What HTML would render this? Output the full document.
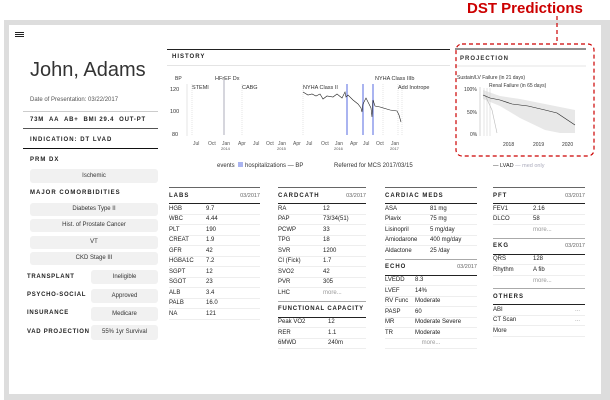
<!DOCTYPE html>
<html><head><meta charset="utf-8">
<style>
*{margin:0;padding:0;box-sizing:border-box}
body{width:610px;height:400px;background:#fff;position:relative;overflow:hidden;font-family:"Liberation Sans",sans-serif;color:#222}
.a{position:absolute;white-space:nowrap}
.frame{position:absolute;left:4px;top:20px;width:606px;height:380px;background:#ddd}
.inner{position:absolute;left:9px;top:25px;width:592px;height:369px;background:#fff}
.t{font-size:6px}
.h{font-size:6px;font-weight:bold;letter-spacing:1px}
.pill{position:absolute;background:#f1f1f1;border-radius:3px;font-size:6px;text-align:center;color:#333}
.line{position:absolute;height:1px}
.tb{position:absolute}
.tb .hd{display:flex;justify-content:space-between;height:17px;align-items:center;border-top:1px solid #666;border-bottom:1px solid #222;font-size:6px;white-space:nowrap}
.tb .hd b{letter-spacing:1px;white-space:nowrap}
.tb .hd span{color:#666;font-size:5.5px}
.tb .r{display:flex;height:10.5px;align-items:center;border-bottom:1px solid #eee;font-size:6px;white-space:nowrap}
.tb .r i{font-style:normal;display:block}
.more{color:#999}
</style></head><body>
<div class="frame"></div><div class="inner"></div>

<div class="a" style="left:15px;top:32px;width:9px;height:1px;background:#222;box-shadow:0 2px 0 #222,0 4px 0 #222"></div>
<div class="a" style="left:30px;top:59px;font-size:20px;font-weight:300;color:#333">John, Adams</div>
<div class="a t" style="left:30px;top:97px;color:#555">Date of Presentation: 03/22/2017</div>
<div class="line" style="left:23px;top:111px;width:135px;background:#ccc"></div>
<div class="a h" style="left:30px;top:117px;letter-spacing:.8px">73M &nbsp;AA &nbsp;AB+ &nbsp;BMI 29.4 &nbsp;OUT-PT</div>
<div class="line" style="left:23px;top:128px;width:135px;background:#555"></div>
<div class="a h" style="left:30px;top:137px">INDICATION: DT LVAD</div>
<div class="line" style="left:23px;top:148px;width:135px;background:#111"></div>
<div class="a h" style="left:30px;top:157px">PRM DX</div>
<div class="pill" style="left:30px;top:169px;width:128px;height:14px;line-height:14px">Ischemic</div>
<div class="a h" style="left:30px;top:190px">MAJOR COMORBIDITIES</div>
<div class="pill" style="left:30px;top:203px;width:128px;height:13px;line-height:13px">Diabetes Type II</div>
<div class="pill" style="left:30px;top:219px;width:128px;height:13px;line-height:13px">Hist. of Prostate Cancer</div>
<div class="pill" style="left:30px;top:236px;width:128px;height:13px;line-height:13px">VT</div>
<div class="pill" style="left:30px;top:252px;width:128px;height:13px;line-height:13px">CKD Stage III</div>
<div class="a h" style="left:27px;top:274px;letter-spacing:.7px">TRANSPLANT</div>
<div class="pill" style="left:91px;top:270px;width:67px;height:14px;line-height:14px">Ineligible</div>
<div class="a h" style="left:27px;top:292px;letter-spacing:.7px">PSYCHO-SOCIAL</div>
<div class="pill" style="left:91px;top:289px;width:67px;height:14px;line-height:14px">Approved</div>
<div class="a h" style="left:27px;top:310px;letter-spacing:.7px">INSURANCE</div>
<div class="pill" style="left:91px;top:307px;width:67px;height:14px;line-height:14px">Medicare</div>
<div class="a h" style="left:27px;top:329px;letter-spacing:.7px">VAD PROJECTION</div>
<div class="pill" style="left:91px;top:325px;width:67px;height:15px;line-height:15px">55% 1yr Survival</div>

<div class="line" style="left:167px;top:49px;width:283px;background:#222"></div>
<div class="a h" style="left:172px;top:54px">HISTORY</div>
<div class="line" style="left:167px;top:65px;width:283px;background:#e4e4e4"></div>
<svg class="a" style="left:0;top:0" width="610" height="400" font-family="Liberation Sans" font-size="5.5" fill="#333">
<g stroke="#ccc" stroke-width="0.5" stroke-dasharray="1,1">
<line x1="192" y1="84" x2="192" y2="135"/><line x1="242" y1="84" x2="242" y2="135"/><line x1="303" y1="84" x2="303" y2="135"/><line x1="383" y1="84" x2="383" y2="135"/><line x1="398" y1="84" x2="398" y2="135"/><line x1="402" y1="84" x2="402" y2="135"/>
</g>
<line x1="224" y1="80" x2="224" y2="135" stroke="#99a" stroke-width="0.8"/>
<rect x="346" y="84" width="2" height="51" fill="#aab4f0"/><rect x="362" y="84" width="2" height="51" fill="#aab4f0"/><rect x="372" y="84" width="2" height="51" fill="#aab4f0"/>
<polyline fill="none" stroke="#222" stroke-width="0.6" points="303,92 308,95 312,94 316,96 320,94 323,99 327,96 333,97 337,94 342,98 345,92 346,97 348,95 353,100 358,104 361,108 362,112 363,104 366,98 369,104 371,108 372,117 373,100 375,106 380,107 390,110 397,111 399,115 401,122"/>
<line x1="187" y1="84" x2="187" y2="136" stroke="#ccc" stroke-width="0.5"/>
<text x="175" y="80" font-size="5">BP</text>
<text x="170" y="91">120</text><text x="170" y="113">100</text><text x="172" y="136">80</text>
<text x="192" y="89">STEMI</text><text x="215" y="80">HFrEF Dx</text><text x="242" y="89">CABG</text><text x="303" y="89">NYHA Class II</text><text x="375" y="80">NYHA Class IIIb</text><text x="398" y="89">Add Inotrope</text>
<g font-size="5" fill="#555"><text x="193" y="145">Jul</text><text x="208" y="145">Oct</text><text x="222" y="145">Jan</text><text x="238" y="145">Apr</text><text x="253" y="145">Jul</text><text x="266" y="145">Oct</text><text x="278" y="145">Jan</text><text x="293" y="145">Apr</text><text x="306" y="145">Jul</text><text x="321" y="145">Oct</text><text x="335" y="145">Jan</text><text x="350" y="145">Apr</text><text x="363" y="145">Jul</text><text x="376" y="145">Oct</text><text x="391" y="145">Jan</text>
<text x="221" y="150" font-size="4">2014</text><text x="277" y="150" font-size="4">2015</text><text x="334" y="150" font-size="4">2016</text><text x="390" y="150" font-size="4">2017</text></g>
<text x="217" y="167" font-size="6">events</text><rect x="238" y="162" width="5" height="5" fill="#aab4f0"/><text x="245" y="167" font-size="6">hospitalizations — BP</text>
<text x="334" y="167" font-size="6">Referred for MCS 2017/03/15</text>

<line x1="455" y1="49" x2="586" y2="49" stroke="#222" stroke-width="1"/>
<text x="460" y="60" font-size="6" font-weight="bold" letter-spacing="1">PROJECTION</text>
<line x1="455" y1="66" x2="586" y2="66" stroke="#e4e4e4" stroke-width="1"/>
<polygon fill="#e8e8e8" points="483,90 500,96 520,99 545,104 575,110 575,133 560,133 545,130 520,118 500,106 483,99"/>
<line x1="480" y1="87" x2="480" y2="136" stroke="#bbb" stroke-width="0.6"/>
<g stroke="#ccc" stroke-width="0.5"><line x1="484" y1="88" x2="484" y2="136"/><line x1="487" y1="88" x2="487" y2="136"/><line x1="490" y1="88" x2="490" y2="136"/></g>
<polyline fill="none" stroke="#bbb" stroke-width="0.6" points="485,95 492,110 497,133"/>
<polyline fill="none" stroke="#222" stroke-width="0.6" points="483,95 490,98 500,100 512,104 528,106 545,110 557,113 575,125"/>
<text x="464" y="91" font-size="5">100%</text><text x="467" y="114" font-size="5">50%</text><text x="470" y="136" font-size="5">0%</text>
<text x="457" y="79" font-size="5">Sustain/LV Failure (in 21 days)</text><text x="489" y="87" font-size="5">Renal Failure (in 65 days)</text>
<text x="503" y="146" font-size="5">2018</text><text x="533" y="146" font-size="5">2019</text><text x="562" y="146" font-size="5">2020</text>
<text x="493" y="167" font-size="5.5" fill="#222">— LVAD <tspan fill="#aab">— med only</tspan></text>

<rect x="456" y="44" width="138" height="112" rx="6" fill="none" stroke="#c00" stroke-width="1.2" stroke-dasharray="4,3"/>
<line x1="557" y1="16" x2="557" y2="43" stroke="#c00" stroke-width="1.2" stroke-dasharray="4,3"/>
<text x="467" y="13" font-size="15" font-weight="bold" fill="#c00">DST Predictions</text>
</svg>

<div class="tb" style="left:169px;top:187px;width:91px">
<div class="hd"><b>LABS</b><span>03/2017</span></div>
<div class="r"><i style="width:37px">HGB</i><i>9.7</i></div>
<div class="r"><i style="width:37px">WBC</i><i>4.44</i></div>
<div class="r"><i style="width:37px">PLT</i><i>190</i></div>
<div class="r"><i style="width:37px">CREAT</i><i>1.9</i></div>
<div class="r"><i style="width:37px">GFR</i><i>42</i></div>
<div class="r"><i style="width:37px">HGBA1C</i><i>7.2</i></div>
<div class="r"><i style="width:37px">SGPT</i><i>12</i></div>
<div class="r"><i style="width:37px">SGOT</i><i>23</i></div>
<div class="r"><i style="width:37px">ALB</i><i>3.4</i></div>
<div class="r"><i style="width:37px">PALB</i><i>16.0</i></div>
<div class="r"><i style="width:37px">NA</i><i>121</i></div>
</div>
<div class="tb" style="left:278px;top:187px;width:88px">
<div class="hd"><b>CARDCATH</b><span>03/2017</span></div>
<div class="r"><i style="width:45px">RA</i><i>12</i></div>
<div class="r"><i style="width:45px">PAP</i><i>73/34(51)</i></div>
<div class="r"><i style="width:45px">PCWP</i><i>33</i></div>
<div class="r"><i style="width:45px">TPG</i><i>18</i></div>
<div class="r"><i style="width:45px">SVR</i><i>1200</i></div>
<div class="r"><i style="width:45px">CI (Fick)</i><i>1.7</i></div>
<div class="r"><i style="width:45px">SVO2</i><i>42</i></div>
<div class="r"><i style="width:45px">PVR</i><i>305</i></div>
<div class="r" style="border-bottom:none"><i style="width:45px">LHC</i><i class="more">more...</i></div>
<div class="hd" style="border-top-color:#aaa;margin-top:2px"><b style="letter-spacing:.8px">FUNCTIONAL CAPACITY</b></div>
<div class="r"><i style="width:50px">Peak VO2</i><i>12</i></div>
<div class="r"><i style="width:50px">RER</i><i>1.1</i></div>
<div class="r"><i style="width:50px">6MWD</i><i>240m</i></div>
</div>
<div class="tb" style="left:385px;top:187px;width:92px">
<div class="hd"><b>CARDIAC MEDS</b></div>
<div class="r"><i style="width:45px">ASA</i><i>81 mg</i></div>
<div class="r"><i style="width:45px">Plavix</i><i>75 mg</i></div>
<div class="r"><i style="width:45px">Lisinopril</i><i>5 mg/day</i></div>
<div class="r"><i style="width:45px">Amiodarone</i><i>400 mg/day</i></div>
<div class="r" style="border-bottom:none"><i style="width:45px">Aldactone</i><i>25 /day</i></div>
<div class="hd" style="border-top-color:#aaa;margin-top:2px"><b>ECHO</b><span>03/2017</span></div>
<div class="r"><i style="width:30px">LVEDD</i><i>8.3</i></div>
<div class="r"><i style="width:30px">LVEF</i><i>14%</i></div>
<div class="r"><i style="width:30px">RV Func</i><i>Moderate</i></div>
<div class="r"><i style="width:30px">PASP</i><i>60</i></div>
<div class="r"><i style="width:30px">MR</i><i>Moderate Severe</i></div>
<div class="r"><i style="width:30px">TR</i><i>Moderate</i></div>
<div class="r" style="justify-content:center"><i class="more">more...</i></div>
</div>
<div class="tb" style="left:493px;top:187px;width:92px">
<div class="hd"><b>PFT</b><span>03/2017</span></div>
<div class="r"><i style="width:40px">FEV1</i><i>2.16</i></div>
<div class="r"><i style="width:40px">DLCO</i><i>58</i></div>
<div class="r" style="padding-left:40px;border-bottom:none"><i class="more">more...</i></div>
<div class="hd" style="border-top-color:#aaa;margin-top:2px"><b>EKG</b><span>03/2017</span></div>
<div class="r"><i style="width:40px">QRS</i><i>128</i></div>
<div class="r"><i style="width:40px">Rhythm</i><i>A fib</i></div>
<div class="r" style="padding-left:40px;border-bottom:none"><i class="more">more...</i></div>
<div class="hd" style="border-top-color:#aaa;margin-top:2px"><b>OTHERS</b></div>
<div class="r"><i style="width:82px">ABI</i><i class="more">...</i></div>
<div class="r"><i style="width:82px">CT Scan</i><i class="more">...</i></div>
<div class="r"><i>More</i></div>
</div>
</body></html>
